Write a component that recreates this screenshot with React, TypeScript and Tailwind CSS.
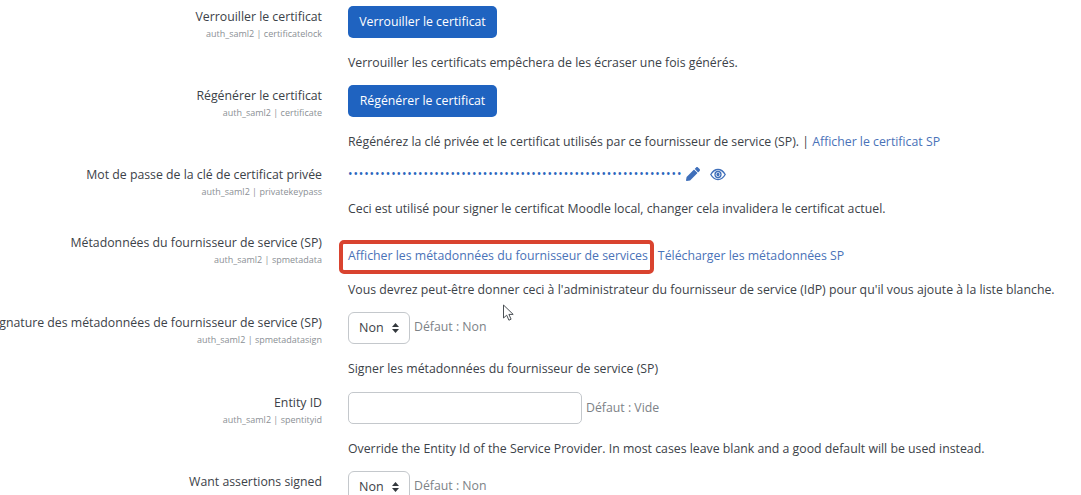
import type { ReactNode } from 'react';

const link = 'text-[#4a72b8]';

function Row({
  label,
  sub,
  control,
  desc,
  controlClass,
  descClass,
}: {
  label: string;
  sub: string;
  control: ReactNode;
  desc: ReactNode;
  controlClass: string;
  descClass: string;
}) {
  return (
    <div className="flex">
      <div className="w-[322px] shrink-0 pt-[1px] flex flex-col items-end">
        <div className="whitespace-nowrap text-[12.3px] leading-5 text-[#3c4248]">{label}</div>
        <div className="whitespace-nowrap text-[9px] leading-[14px] text-[#8b9095]">{sub}</div>
      </div>
      <div className="ml-[26px] flex-1 min-w-0">
        <div className={`flex items-center ${controlClass}`}>{control}</div>
        <div className={`whitespace-nowrap text-[12.3px] leading-5 text-[#3c4248] ${descClass}`}>{desc}</div>
      </div>
    </div>
  );
}

function PrimaryButton({ children }: { children: string }) {
  return (
    <button className="h-[32px] w-[149px] whitespace-nowrap rounded-[5px] bg-[#1f63c0] text-[12.3px] text-white">
      {children}
    </button>
  );
}

function NonSelect() {
  return (
    <>
      <div className="flex h-[32px] w-[62px] items-center justify-between rounded-[6px] border border-[#c4c8cc] pl-[10px] pr-[10px] text-[12.5px] text-[#3c4248]">
        <span>Non</span>
        <svg width="7" height="10" viewBox="0 0 7 10" fill="#33383d">
          <path d="M3.5 0 7 4H0zM3.5 10 0 6h7z" />
        </svg>
      </div>
      <span className="ml-[4px] -mt-[2px] text-[12.3px] text-[#7d8287]">Défaut : Non</span>
    </>
  );
}

function RedBox() {
  return <div className="absolute left-[339px] top-[240px] h-[34px] w-[315px] rounded-[5px] border-[4px] border-[#d9432f]" />;
}

function Cursor() {
  return (
    <svg className="absolute left-[502px] top-[304px]" width="13" height="18" viewBox="0 0 13 18" fill="#fff" stroke="#4b5055" strokeWidth="1">
      <path d="M1.5 1v13l3.2-2.8 2.2 5 2.2-1-2.2-4.8h4.3z" />
    </svg>
  );
}

export default function App() {
  return (
    <div
      className="relative h-[495px] w-[1081px] overflow-hidden bg-white pt-[6px]"
      style={{ fontFamily: '"Open Sans", "Noto Sans", sans-serif' }}
    >
      <div className="flex flex-col gap-[12px]">
        <Row
          label="Verrouiller le certificat"
          sub="auth_saml2 | certificatelock"
          controlClass="h-[32px]"
          descClass="mt-[15px]"
          control={<PrimaryButton>Verrouiller le certificat</PrimaryButton>}
          desc="Verrouiller les certificats empêchera de les écraser une fois générés."
        />
        <Row
          label="Régénérer le certificat"
          sub="auth_saml2 | certificate"
          controlClass="h-[32px]"
          descClass="mt-[15px]"
          control={<PrimaryButton>Régénérer le certificat</PrimaryButton>}
          desc={
            <>
              Régénérez la clé privée et le certificat utilisés par ce fournisseur de service (SP). |{' '}
              <a className={link}>Afficher le certificat SP</a>
            </>
          }
        />
        <Row
          label="Mot de passe de la clé de certificat privée"
          sub="auth_saml2 | privatekeypass"
          controlClass="h-[20px]"
          descClass="mt-[15px] mb-[1px]"
          control={
            <>
              <span className="text-[12px] leading-5 tracking-[0.88px] text-[#2a66bd]">{'•'.repeat(62)}</span>
              <svg className="ml-[4px]" width="14" height="14" viewBox="0 0 512 512" fill="#3f6fba">
                <path d="M497.9 142.1l-46.1 46.1c-4.7 4.7-12.3 4.7-17 0l-111-111c-4.7-4.7-4.7-12.3 0-17l46.1-46.1c18.7-18.7 49.1-18.7 67.9 0l60.1 60.1c18.8 18.7 18.8 49.1 0 67.9zM284.2 99.8L21.6 362.4.4 483.9c-2.9 16.4 11.4 30.6 27.8 27.8l121.5-21.3 262.6-262.6c4.7-4.7 4.7-12.3 0-17l-111-111c-4.8-4.7-12.4-4.7-17.1 0z" />
              </svg>
              <svg className="ml-[10px]" width="16" height="13" viewBox="0 0 16 13" fill="none" stroke="#3f6fba" strokeWidth="1.3">
                <path d="M.8 6.5C2.6 3.3 5.1 1.5 8 1.5s5.4 1.8 7.2 5c-1.8 3.2-4.3 5-7.2 5s-5.4-1.8-7.2-5z" />
                <circle cx="8" cy="6.5" r="3" />
                <circle cx="8" cy="6.5" r="1" fill="#3f6fba" />
              </svg>
            </>
          }
          desc="Ceci est utilisé pour signer le certificat Moodle local, changer cela invalidera le certificat actuel."
        />
        <Row
          label="Métadonnées du fournisseur de service (SP)"
          sub="auth_saml2 | spmetadata"
          controlClass="h-[34px] pt-[14px]"
          descClass="mt-[14px]"
          control={
            <>
              <a className={link + ' text-[12.3px]'}>Afficher les métadonnées du fournisseur de services</a>
              <a className={link + ' ml-[10px] text-[12.3px]'}>Télécharger les métadonnées SP</a>
            </>
          }
          desc="Vous devrez peut-être donner ceci à l'administrateur du fournisseur de service (IdP) pour qu'il vous ajoute à la liste blanche."
        />
        <Row
          label="Signature des métadonnées de fournisseur de service (SP)"
          sub="auth_saml2 | spmetadatasign"
          controlClass="h-[32px]"
          descClass="mt-[15px] mb-[1px]"
          control={<NonSelect />}
          desc="Signer les métadonnées du fournisseur de service (SP)"
        />
        <Row
          label="Entity ID"
          sub="auth_saml2 | spentityid"
          controlClass="h-[32px]"
          descClass="mt-[15px]"
          control={
            <>
              <div className="h-[32px] w-[234px] rounded-[5px] border border-[#c4c8cc]" />
              <span className="ml-[4px] text-[12.3px] text-[#7d8287]">Défaut : Vide</span>
            </>
          }
          desc="Override the Entity Id of the Service Provider. In most cases leave blank and a good default will be used instead."
        />
        <Row
          label="Want assertions signed"
          sub="auth_saml2 | spwantassertionssigned"
          controlClass="h-[32px]"
          descClass="mt-[15px]"
          control={<NonSelect />}
          desc=""
        />
      </div>
      <RedBox />
      <Cursor />
    </div>
  );
}
